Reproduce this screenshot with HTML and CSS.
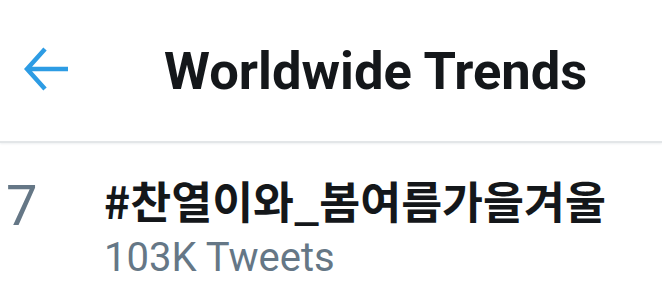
FILE: index.html
```html
<!DOCTYPE html>
<html>
<head>
  <title>Worldwide Trends</title>
  <link rel="stylesheet" href="styles.css">
</head>
<body>
  <div class="header">
    <div class="back">
      <svg width="44" height="44" viewBox="0 0 44 44">
        <path d="M21 2 L3 22 L21 42 M3 22 L44 22" fill="none" stroke="#2d9ce4" stroke-width="4.5"/>
      </svg>
    </div>
    <h1 class="title">Worldwide Trends</h1>
  </div>

  <div class="trend">
    <div class="rank">7</div>
    <div class="trend-info">
      <div class="tag">#찬열이와_봄여름가을겨울</div>
      <div class="count">103K Tweets</div>
    </div>
  </div>
</body>
</html>
```

FILE: styles.css
```css
body {
  margin: 0;
  font-family: Roboto, "Noto Sans CJK KR", sans-serif;
  background-color: #ffffff;
  width: 662px;
  height: 300px;
  overflow: hidden;
}

.header {
  display: flex;
  align-items: center;
  height: 141px;
  border-bottom: 2px solid #e3e6e8;
  box-shadow: 0 1px 2px #eef0f2;
}

.back {
  display: flex;
  margin: 0 0 4px 24px;
  width: 44px;
  height: 44px;
}

.title {
  margin: 0 0 0 96px;
  font-size: 52.5px;
  font-weight: 700;
  color: #14171a;
}

.trend {
  display: flex;
  padding-top: 31px;
}

.rank {
  width: 104px;
  padding: 4px 0 0 6px;
  box-sizing: border-box;
  font-size: 56px;
  line-height: 1;
  color: #657786;
}

.tag {
  font-family: "Noto Sans CJK KR", sans-serif;
  font-size: 44.5px;
  font-weight: 700;
  line-height: 52px;
  color: #14171a;
}

.count {
  margin-top: 8px;
  font-size: 40px;
  line-height: 48px;
  color: #657786;
}
```
